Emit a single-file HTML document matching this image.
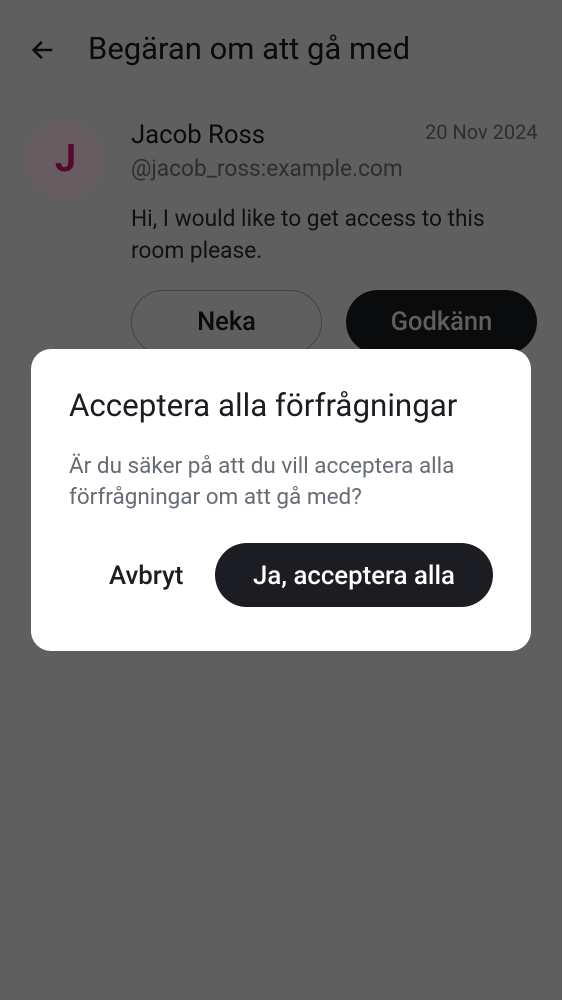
<!DOCTYPE html>
<html><head><meta charset="utf-8"><style>
*{margin:0;padding:0;box-sizing:border-box}
body{width:562px;height:1000px;background:#5f5f5f;font-family:"Roboto","Liberation Sans",sans-serif;position:relative;overflow:hidden;color:#0b0b0c}
.a{position:absolute;white-space:nowrap}
</style></head><body>
<svg class="a" style="left:29px;top:36px" width="28" height="28" viewBox="0 0 24 24"><path d="M20 12H5M11 5l-7 7 7 7" fill="none" stroke="#0b0b0c" stroke-width="2.2"/></svg>
<div class="a" style="left:88px;top:30px;font-size:31px">Begäran om att gå med</div>
<div class="a" style="left:25px;top:119px;width:81px;height:81px;border-radius:50%;background:#675d60;color:#58082f;font-size:38px;font-weight:bold;text-align:center;line-height:81px">J</div>
<div class="a" style="left:131px;top:120px;font-size:25.7px">Jacob Ross</div>
<div class="a" style="left:425px;top:120px;font-size:20px;color:#2e2e2f">20 Nov 2024</div>
<div class="a" style="left:131px;top:155px;font-size:22.7px;color:#2e2e2f">@jacob_ross:example.com</div>
<div class="a" style="left:131px;top:203px;font-size:22.7px;line-height:32px;color:#111">Hi, I would like to get access to this<br>room please.</div>
<div class="a" style="left:131px;top:290px;width:191px;height:64px;border:1px solid #444;border-radius:32px;text-align:center;line-height:62px;font-size:25.5px;font-weight:500">Neka</div>
<div class="a" style="left:346px;top:290px;width:191px;height:64px;background:#0a0b0c;border-radius:32px;text-align:center;line-height:64px;font-size:25.5px;font-weight:500;color:#5f5f5f">Godkänn</div>
<div class="a" style="left:31px;top:349px;width:500px;height:302px;background:#fff;border-radius:20px"></div>
<div class="a" style="left:69px;top:387px;font-size:31.3px;color:#1b1d22">Acceptera alla förfrågningar</div>
<div class="a" style="left:69px;top:451px;font-size:22.5px;line-height:31px;color:#656c76">Är du säker på att du vill acceptera alla<br>förfrågningar om att gå med?</div>
<div class="a" style="left:109px;top:561px;font-size:25.8px;font-weight:500;color:#1b1d22">Avbryt</div>
<div class="a" style="left:215px;top:543px;width:278px;height:64px;background:#1b1d22;border-radius:32px;text-align:center;line-height:66px;font-size:25.8px;font-weight:500;color:#fff">Ja, acceptera alla</div>
</body></html>
